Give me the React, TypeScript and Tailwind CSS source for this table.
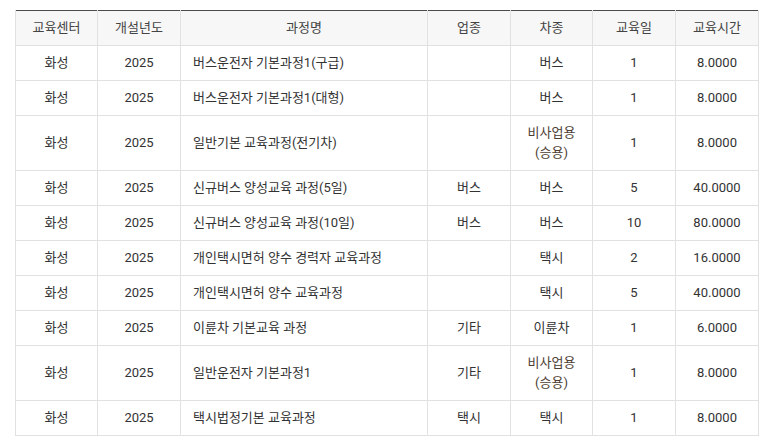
const rows = [
  { center: "화성", year: "2025", name: "버스운전자 기본과정1(구급)", biz: "", car: "버스", days: "1", hours: "8.0000" },
  { center: "화성", year: "2025", name: "버스운전자 기본과정1(대형)", biz: "", car: "버스", days: "1", hours: "8.0000" },
  { center: "화성", year: "2025", name: "일반기본 교육과정(전기차)", biz: "", car: "비사업용\n(승용)", days: "1", hours: "8.0000" },
  { center: "화성", year: "2025", name: "신규버스 양성교육 과정(5일)", biz: "버스", car: "버스", days: "5", hours: "40.0000" },
  { center: "화성", year: "2025", name: "신규버스 양성교육 과정(10일)", biz: "버스", car: "버스", days: "10", hours: "80.0000" },
  { center: "화성", year: "2025", name: "개인택시면허 양수 경력자 교육과정", biz: "", car: "택시", days: "2", hours: "16.0000" },
  { center: "화성", year: "2025", name: "개인택시면허 양수 교육과정", biz: "", car: "택시", days: "5", hours: "40.0000" },
  { center: "화성", year: "2025", name: "이륜차 기본교육 과정", biz: "기타", car: "이륜차", days: "1", hours: "6.0000" },
  { center: "화성", year: "2025", name: "일반운전자 기본과정1", biz: "기타", car: "비사업용\n(승용)", days: "1", hours: "8.0000" },
  { center: "화성", year: "2025", name: "택시법정기본 교육과정", biz: "택시", car: "택시", days: "1", hours: "8.0000" },
];

const headers = ["교육센터", "개설년도", "과정명", "업종", "차종", "교육일", "교육시간"];
const widths = ["w-[82px]", "w-[83px]", "w-[247px]", "w-[83px]", "w-[82px]", "w-[83px]", "w-[83px]"];

export default function App() {
  return (
    <div className="min-h-[447px] bg-white pl-[15px] pt-[10px] font-['Roboto','Noto_Sans_CJK_KR',sans-serif] text-[13px] text-[#333]">
      <table className="w-[744px] table-fixed border-collapse border-t border-t-[#4a4a4a]">
        <colgroup>
          {widths.map((w, i) => (
            <col key={i} className={w} />
          ))}
        </colgroup>
        <thead>
          <tr className="h-[35px] bg-[#f7f7f7]">
            {headers.map((h) => (
              <th
                key={h}
                className="border border-t-0 border-[#e1e1e1] px-2 text-center font-normal leading-5 text-[#444]"
              >
                {h}
              </th>
            ))}
          </tr>
        </thead>
        <tbody>
          {rows.map((r, i) => {
            const isMulti = r.car.includes("\n");
            return (
              <tr key={i} className="h-[35px]">
                <td className="border border-[#e1e1e1] py-[7px] text-center leading-5">{r.center}</td>
                <td className="border border-[#e1e1e1] py-[7px] text-center leading-5">{r.year}</td>
                <td className="border border-[#e1e1e1] px-3 py-[7px] text-left leading-5">{r.name}</td>
                <td className="border border-[#e1e1e1] py-[7px] text-center leading-5">{r.biz}</td>
                <td
                  className={
                    isMulti
                      ? "whitespace-pre-line border border-[#e1e1e1] py-[7px] text-center leading-5 text-[#4d3d33]"
                      : "border border-[#e1e1e1] py-[7px] text-center leading-5"
                  }
                >
                  {r.car}
                </td>
                <td className="border border-[#e1e1e1] py-[7px] text-center leading-5">{r.days}</td>
                <td className="border border-[#e1e1e1] py-[7px] text-center leading-5">{r.hours}</td>
              </tr>
            );
          })}
        </tbody>
      </table>
    </div>
  );
}
